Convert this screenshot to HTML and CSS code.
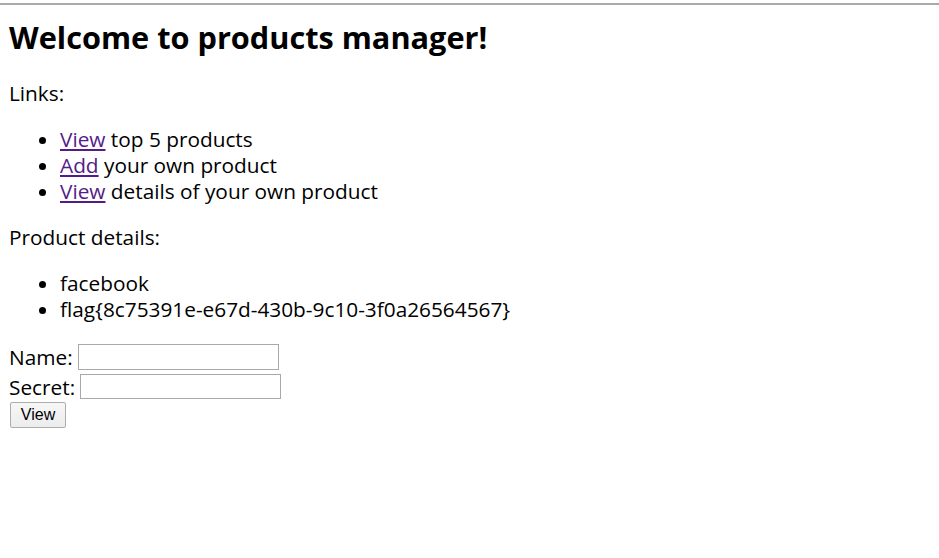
FILE: index.html
```html
<!DOCTYPE html>
<html>
<head>
<meta charset="utf-8">
<title>products manager</title>
<link rel="stylesheet" href="styles.css">
</head>
<body>
<div class="topline"></div>
<main class="page">
  <h1 class="title">Welcome to products manager!</h1>
  <p class="para">Links:</p>
  <ul class="list">
    <li><a href="#">View</a> top 5 products</li>
    <li><a href="#">Add</a> your own product</li>
    <li><a href="#">View</a> details of your own product</li>
  </ul>
  <p class="para">Product details:</p>
  <ul class="list">
    <li>facebook</li>
    <li>flag{8c75391e-e67d-430b-9c10-3f0a26564567}</li>
  </ul>
  <form class="form">
    <div class="row row-name"><label>Name:</label><input class="field" type="text"></div>
    <div class="row row-secret"><label>Secret:</label><input class="field" type="text"></div>
    <div class="row"><button class="btn" type="button">View</button></div>
  </form>
</main>
</body>
</html>
```
FILE: styles.css
```css
html, body {
  margin: 0;
  padding: 0;
  background: #fff;
}
body {
  font-family: "Open Sans", "Noto Sans", sans-serif;
  font-size: 20.8px;
  line-height: 26px;
  color: #000;
}
.topline {
  height: 2px;
  margin-top: 3px;
  background: #aaaaaa;
}
.page {
  padding: 0 9px;
}
.title {
  font-size: 30.7px;
  line-height: 40px;
  font-weight: bold;
  margin: 12px 0 23px 0;
}
.para {
  margin: 20px 0 0 0;
}
.list {
  margin: 20px 0 0 0;
  padding-left: 51px;
}
.list a {
  color: #551a8b;
  text-decoration: underline;
}
.form {
  margin-top: 22px;
  display: flex;
  flex-direction: column;
}
.row {
  display: flex;
  align-items: center;
  gap: 5px;
}
.row-name {
  height: 26px;
}
.row-secret {
  margin-top: 4px;
  height: 25px;
}
.field {
  width: 201px;
  height: 26px;
  box-sizing: border-box;
  border: 1px solid #a9a9a9;
  padding: 0 2px;
  margin: 0;
  font-size: 14px;
}
.row-secret .field {
  height: 25px;
}
.btn {
  margin: 3px 0 0 1px;
  width: 56px;
  height: 26px;
  box-sizing: border-box;
  font-family: "Liberation Sans", Arial, sans-serif;
  font-size: 16px;
  color: #000;
  background: linear-gradient(#f7f7f7, #ececec);
  border: 1px solid #adadad;
  border-radius: 2px;
  padding: 0;
}
```
